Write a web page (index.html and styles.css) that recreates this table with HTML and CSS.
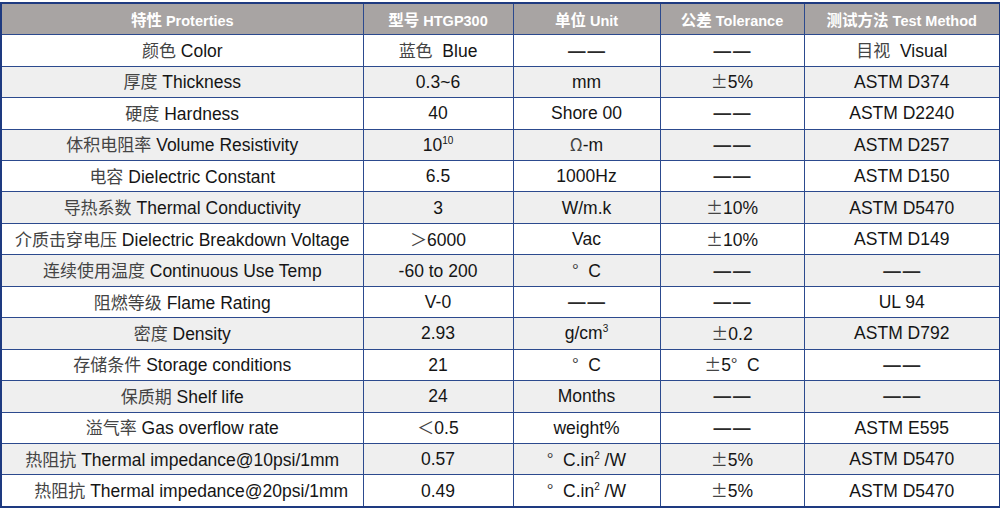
FILE: index.html
```html
<!DOCTYPE html>
<html lang="zh">
<head>
<meta charset="utf-8">
<title>HTGP300</title>
<link rel="stylesheet" href="styles.css">
</head>
<body>
<table class="spec">
  <colgroup>
    <col class="c1"><col class="c2"><col class="c3"><col class="c4"><col class="c5">
  </colgroup>
  <thead>
    <tr>
      <th><span class="zh">特性</span> Proterties</th>
      <th><span class="zh">型号</span> HTGP300</th>
      <th><span class="zh">单位</span> Unit</th>
      <th><span class="zh">公差</span> Tolerance</th>
      <th><span class="zh">测试方法</span> Test Method</th>
    </tr>
  </thead>
  <tbody>
    <tr><td><span class="zh">颜色</span> Color</td><td><span class="zh">蓝色</span>&nbsp; Blue</td><td class="dash">——</td><td class="dash">——</td><td><span class="zh">目视</span>&nbsp; Visual</td></tr>
    <tr><td><span class="zh">厚度</span> Thickness</td><td>0.3~6</td><td>mm</td><td><span class="zh">±</span>5%</td><td>ASTM D374</td></tr>
    <tr><td><span class="zh">硬度</span> Hardness</td><td>40</td><td>Shore 00</td><td class="dash">——</td><td>ASTM D2240</td></tr>
    <tr><td><span class="zh">体积电阻率</span> Volume Resistivity</td><td>10<sup>10</sup></td><td><span class="zh">Ω</span>-m</td><td class="dash">——</td><td>ASTM D257</td></tr>
    <tr><td><span class="zh">电容</span> Dielectric Constant</td><td>6.5</td><td>1000Hz</td><td class="dash">——</td><td>ASTM D150</td></tr>
    <tr><td><span class="zh">导热系数</span> Thermal Conductivity</td><td>3</td><td>W/m.k</td><td><span class="zh">±</span>10%</td><td>ASTM D5470</td></tr>
    <tr><td><span class="zh">介质击穿电压</span> Dielectric Breakdown Voltage</td><td><span class="zh">＞</span>6000</td><td>Vac</td><td><span class="zh">±</span>10%</td><td>ASTM D149</td></tr>
    <tr><td><span class="zh">连续使用温度</span> Continuous Use Temp</td><td>-60 to 200</td><td><span class="zh">°</span>&nbsp; C</td><td class="dash">——</td><td class="dash">——</td></tr>
    <tr><td><span class="zh">阻燃等级</span> Flame Rating</td><td>V-0</td><td class="dash">——</td><td class="dash">——</td><td>UL 94</td></tr>
    <tr><td><span class="zh">密度</span> Density</td><td>2.93</td><td>g/cm<sup>3</sup></td><td><span class="zh">±</span>0.2</td><td>ASTM D792</td></tr>
    <tr><td><span class="zh">存储条件</span> Storage conditions</td><td>21</td><td><span class="zh">°</span>&nbsp; C</td><td><span class="zh">±</span>5<span class="zh">°</span>&nbsp; C</td><td class="dash">——</td></tr>
    <tr><td><span class="zh">保质期</span> Shelf life</td><td>24</td><td>Months</td><td class="dash">——</td><td class="dash">——</td></tr>
    <tr><td><span class="zh">溢气率</span> Gas overflow rate</td><td><span class="zh">＜</span>0.5</td><td>weight%</td><td class="dash">——</td><td>ASTM E595</td></tr>
    <tr><td><span class="zh">热阻抗</span> Thermal impedance@10psi/1mm</td><td>0.57</td><td><span class="zh">°</span>&nbsp; C.in<sup>2</sup> /W</td><td><span class="zh">±</span>5%</td><td>ASTM D5470</td></tr>
    <tr><td class="shift"><span class="zh">热阻抗</span> Thermal impedance@20psi/1mm</td><td>0.49</td><td><span class="zh">°</span>&nbsp; C.in<sup>2</sup> /W</td><td><span class="zh">±</span>5%</td><td>ASTM D5470</td></tr>
  </tbody>
</table>
</body>
</html>
```

FILE: styles.css
```css
html, body {
  margin: 0;
  padding: 0;
  background: #ffffff;
}
body {
  padding-top: 2px;
  font-family: "Liberation Sans", "Noto Sans CJK SC", sans-serif;
  color: #151515;
}
.spec {
  width: 999px;
  border-collapse: collapse;
  border: 2px solid #1e3a80;
  table-layout: fixed;
}
.c1 { width: 362px; }
.c2 { width: 150px; }
.c3 { width: 147px; }
.c4 { width: 144px; }
.c5 { width: 196px; }
.spec th, .spec td {
  border: 1px solid #2c4a8e;
  text-align: center;
  padding: 0;
  white-space: nowrap;
}
.spec th {
  height: 30.3px;
  background: #a8a4a3;
  color: #ffffff;
  font-weight: bold;
  font-size: 14.5px;
}
.spec th .zh {
  font-size: 15.5px;
  font-weight: bold;
  color: #ffffff;
}
.spec td {
  height: 30.45px;
  font-size: 17.5px;
  line-height: 18px;
}
.spec tbody tr:nth-child(even) td {
  background: #efefef;
}
.zh {
  font-family: "Noto Sans CJK SC", sans-serif;
  color: #444444;
  font-size: 17px;
}
.dash {
  font-family: "Liberation Sans", sans-serif;
  color: #2a2a2a;
  font-size: 17px;
  letter-spacing: 2px;
  text-indent: 2px;
  font-weight: bold;
}
sup {
  font-size: 10px;
  line-height: 0;
  vertical-align: 7px;
}
.shift {
  padding-left: 18px !important;
}
```
